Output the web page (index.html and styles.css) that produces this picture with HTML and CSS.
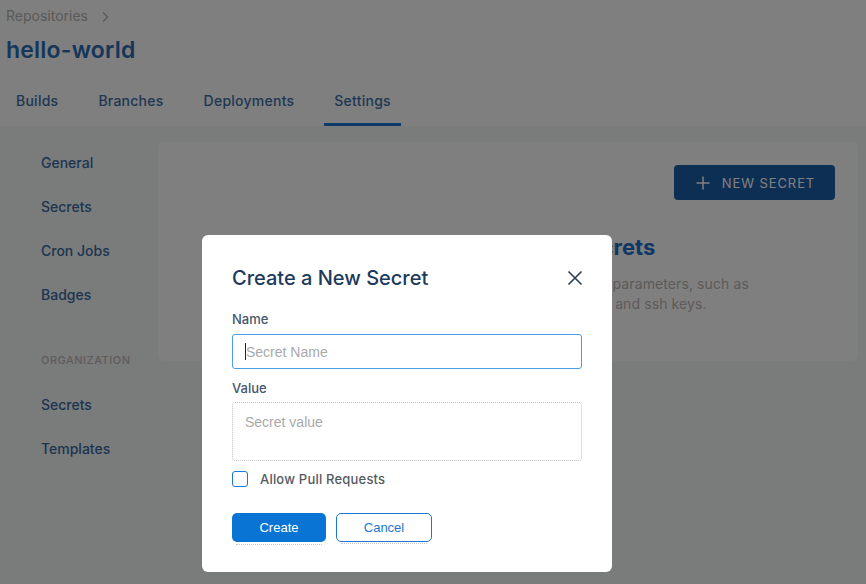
FILE: index.html
```html
<!DOCTYPE html>
<html lang="en">
<head>
<meta charset="utf-8">
<title>hello-world · Settings · Secrets</title>
<link rel="stylesheet" href="styles.css">
</head>
<body>
<div class="page">
  <header class="top">
    <nav class="crumbs">
      <a class="crumb">Repositories</a>
      <svg class="crumb-sep" width="10" height="12" viewBox="0 0 10 12"><path d="M3 1.5 L7.5 6 L3 10.5" fill="none" stroke="currentColor" stroke-width="1.4"/></svg>
    </nav>
    <h1 class="repo-title">hello-world</h1>
    <nav class="tabs">
      <a class="tab">Builds</a>
      <a class="tab">Branches</a>
      <a class="tab">Deployments</a>
      <a class="tab tab-active">Settings</a>
    </nav>
  </header>
  <div class="content">
    <aside class="sidebar">
      <a class="side-link">General</a>
      <a class="side-link">Secrets</a>
      <a class="side-link">Cron Jobs</a>
      <a class="side-link">Badges</a>
      <div class="side-section">Organization</div>
      <a class="side-link">Secrets</a>
      <a class="side-link">Templates</a>
    </aside>
    <main class="card">
      <div class="card-actions">
        <button class="btn-new">
          <svg width="14" height="14" viewBox="0 0 14 14"><path d="M7 0.5 V13.5 M0.5 7 H13.5" stroke="currentColor" stroke-width="1.5" fill="none"/></svg>
          <span>NEW SECRET</span>
        </button>
      </div>
      <div class="empty">
        <h2 class="empty-title">Secrets</h2>
        <p class="empty-text">Store parameters, such as<br>certs, and ssh keys.</p>
      </div>
    </main>
  </div>
</div>

<div class="overlay"></div>

<div class="modal">
  <div class="modal-head">
    <h3 class="modal-title">Create a New Secret</h3>
    <button class="modal-close" aria-label="Close">
      <svg width="16" height="16" viewBox="0 0 16 16"><path d="M1.5 1.5 L14.5 14.5 M14.5 1.5 L1.5 14.5" stroke="currentColor" stroke-width="1.6" fill="none"/></svg>
    </button>
  </div>
  <label class="field-label">Name</label>
  <div class="input-wrap">
    <input class="text-input" type="text" placeholder="Secret Name">
    <span class="caret"></span>
  </div>
  <label class="field-label field-label-2">Value</label>
  <textarea class="text-area" placeholder="Secret value"></textarea>
  <label class="check-row">
    <span class="check-box"></span>
    <span class="check-label">Allow Pull Requests</span>
  </label>
  <div class="modal-actions">
    <button class="btn btn-primary">Create</button>
    <button class="btn btn-outline">Cancel</button>
  </div>
</div>
</body>
</html>
```

FILE: styles.css
```css
* { box-sizing: border-box; }

html, body {
  margin: 0;
  padding: 0;
}

body {
  width: 866px;
  height: 584px;
  overflow: hidden;
  background: #f4f8f8;
  font-family: Inter, "Noto Sans", sans-serif;
}

a { text-decoration: none; }

.page {
  display: flex;
  flex-direction: column;
  height: 584px;
}

/* Header */
.top {
  background: #ffffff;
  padding-top: 7px;
}

.crumbs {
  display: flex;
  align-items: center;
  gap: 12px;
  padding-left: 6px;
  height: 18px;
  color: #b4b4b4;
  font-size: 14px;
  line-height: 18px;
}

.crumb { color: #b4b4b4; }

.crumb-sep { color: #b4b4b4; margin-top: 1px; }

.repo-title {
  margin: 12px 0 0 6px;
  font-size: 23px;
  line-height: 26px;
  font-weight: 600;
  color: #2c6cb4;
  letter-spacing: 0.2px;
}

.tabs {
  display: flex;
  gap: 20px;
  padding-left: 6px;
  margin-top: 15px;
}

.tab {
  padding: 13px 10px 12px;
  font-size: 14px;
  line-height: 20px;
  font-weight: 500;
  letter-spacing: 0.25px;
  color: #3c6ea6;
  border-bottom: 3px solid transparent;
}

.tab-active {
  border-bottom-color: #1a74d2;
}

/* Body */
.content {
  display: flex;
  align-items: flex-start;
  flex: 1;
}

.sidebar {
  width: 158px;
  flex: none;
  display: flex;
  flex-direction: column;
  padding: 15px 0 0 41px;
}

.side-link {
  height: 44px;
  line-height: 44px;
  font-size: 14px;
  font-weight: 500;
  color: #3a6aa2;
}

.side-section {
  margin: 33px 0 13px;
  height: 20px;
  line-height: 20px;
  font-size: 11px;
  font-weight: 500;
  letter-spacing: 0.5px;
  text-transform: uppercase;
  color: #c2b6b6;
}

.card {
  flex: 1;
  margin: 16px 8px 0 0;
  background: #ffffff;
  border-radius: 6px;
  padding: 23px 23px 47px;
  display: flex;
  flex-direction: column;
}

.card-actions {
  display: flex;
  justify-content: flex-end;
}

.btn-new {
  width: 161px;
  height: 35px;
  display: flex;
  align-items: center;
  justify-content: center;
  gap: 12px;
  border: none;
  border-radius: 4px;
  background: #1c5ea8;
  color: #ffffff;
  font-family: Inter, sans-serif;
  font-size: 13px;
  font-weight: 400;
  letter-spacing: 0.9px;
  padding: 0 0 0 2px;
}

.empty {
  margin: 33px 0 0 392px;
}

.empty-title {
  margin: 0;
  font-size: 22px;
  line-height: 28px;
  font-weight: 700;
  color: #1e70c8;
}

.empty-text {
  margin: 13px 0 0;
  font-size: 14px;
  line-height: 20px;
  letter-spacing: 0.1px;
  color: #bcb4b4;
}

/* Overlay + modal */
.overlay {
  position: fixed;
  inset: 0;
  background: rgba(0, 0, 0, 0.5);
}

.modal {
  position: fixed;
  left: 202px;
  top: 235px;
  width: 410px;
  height: 337px;
  background: #ffffff;
  border-radius: 6px;
  padding: 30px;
  display: flex;
  flex-direction: column;
}

.modal-head {
  display: flex;
  align-items: center;
  justify-content: space-between;
  height: 26px;
}

.modal-title {
  margin: 0;
  font-size: 20px;
  line-height: 26px;
  font-weight: 500;
  color: #1b3a5c;
}

.modal-close {
  border: none;
  background: none;
  padding: 0;
  width: 16px;
  height: 16px;
  margin-right: -1px;
  color: #2c3e50;
  display: flex;
}

.field-label {
  margin-top: 20px;
  font-size: 13px;
  line-height: 16px;
  font-weight: 500;
  color: #44586e;
}

.field-label-2 { margin-top: 11px; }

.input-wrap {
  position: relative;
  margin-top: 7px;
}

.text-input {
  display: block;
  width: 350px;
  height: 35px;
  border: 1px solid #4a9fe4;
  border-radius: 3px;
  padding: 0 12px 0 13px;
  font-family: "Liberation Sans", Arial, sans-serif;
  font-size: 14px;
  outline: none;
}

.text-input::placeholder { color: #a9a9a9; }

.caret {
  position: absolute;
  left: 13px;
  top: 9px;
  width: 1px;
  height: 17px;
  background: #222;
}

.text-area {
  display: block;
  margin-top: 6px;
  width: 350px;
  height: 59px;
  border: 1px dotted #c4c4c4;
  border-radius: 3px;
  padding: 11px 12px;
  resize: none;
  font-family: "Liberation Sans", Arial, sans-serif;
  font-size: 14px;
  line-height: 16px;
  outline: none;
}

.text-area::placeholder { color: #a9a9a9; }

.check-row {
  display: flex;
  align-items: center;
  gap: 12px;
  margin-top: 10px;
  height: 16px;
}

.check-box {
  width: 16px;
  height: 16px;
  border: 1.5px solid #1a78d4;
  border-radius: 3px;
}

.check-label {
  font-size: 13px;
  font-weight: 500;
  letter-spacing: 0.2px;
  color: #555a5f;
}

.modal-actions {
  display: flex;
  gap: 10px;
  margin-top: 26px;
}

.btn {
  position: relative;
  height: 29px;
  border-radius: 5px;
  font-family: "Liberation Sans", Arial, sans-serif;
  font-size: 13px;
  padding: 0;
}

.btn::after {
  content: "";
  position: absolute;
  left: 4px;
  right: 4px;
  bottom: -3px;
  border-bottom: 1px dotted #c8c8c8;
}

.btn-primary {
  width: 94px;
  border: none;
  background: #0a74d4;
  color: #ffffff;
}

.btn-outline {
  width: 96px;
  border: 1px solid #1a78d4;
  background: #ffffff;
  color: #1a78d4;
}
```
